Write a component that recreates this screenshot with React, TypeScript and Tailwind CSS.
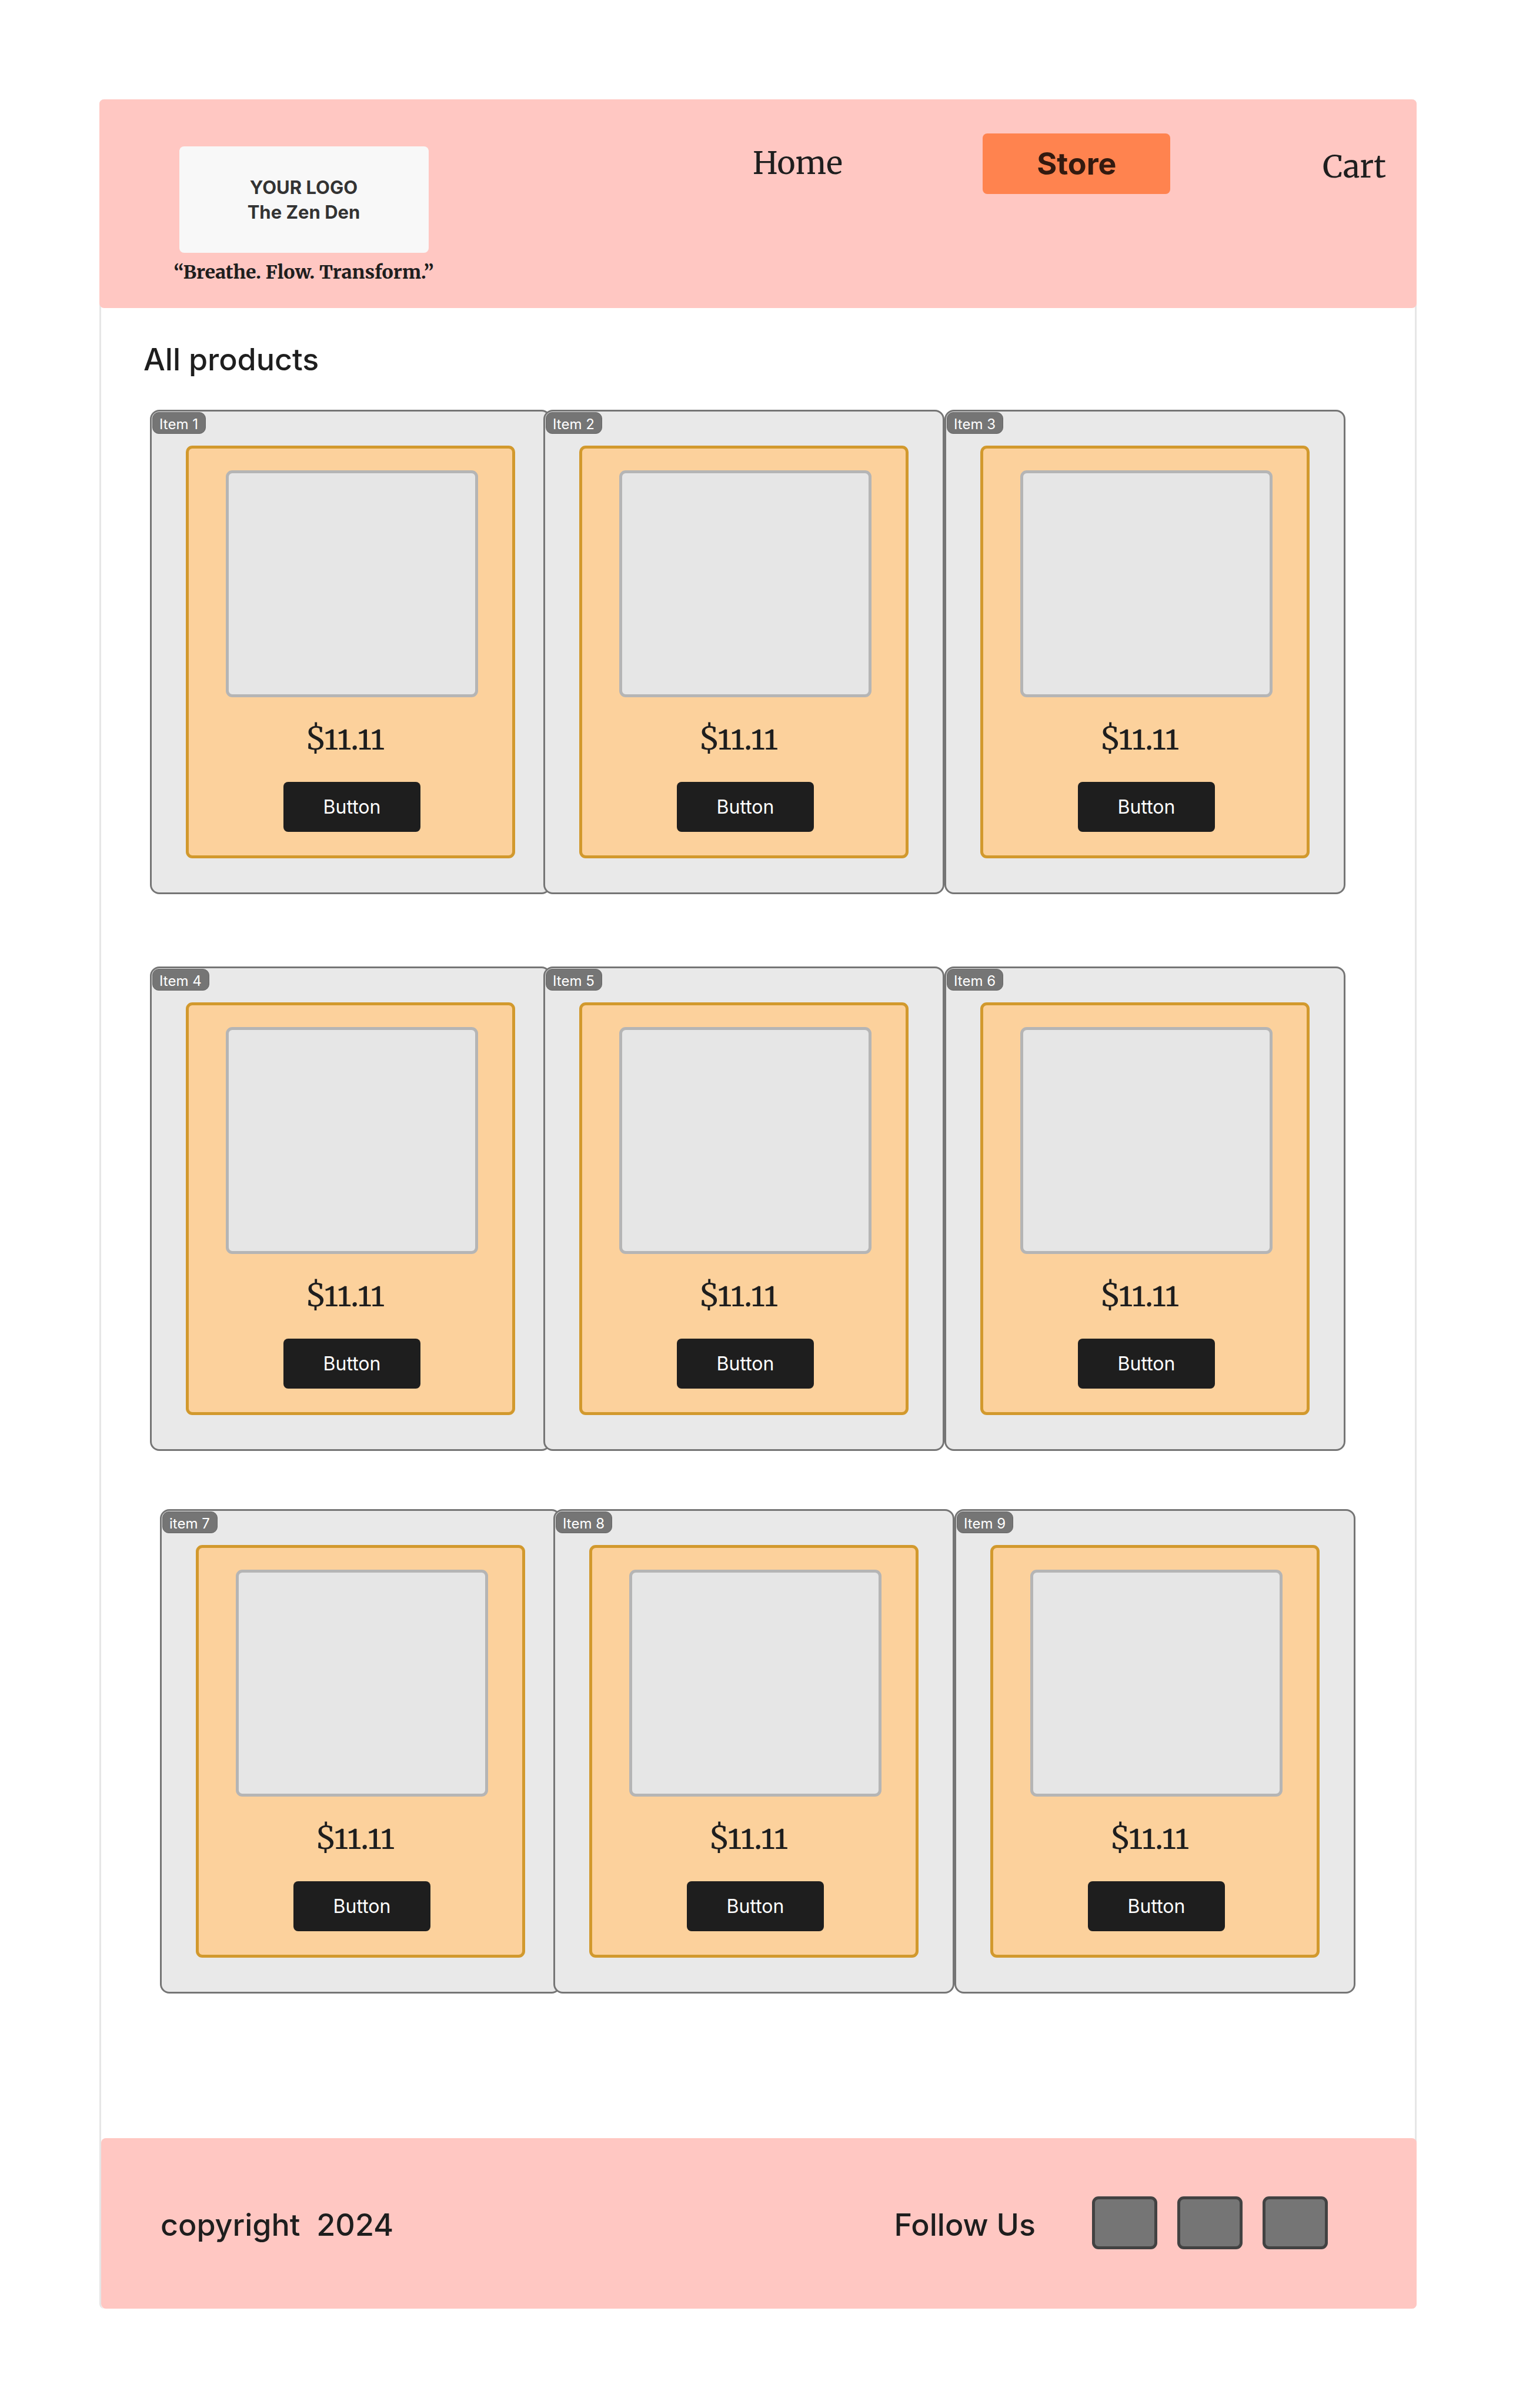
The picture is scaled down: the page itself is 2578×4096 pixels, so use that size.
const rows = [
  { id: "first", labels: ["Item 1", "Item 2", "Item 3"], className: "flex" },
  { id: "second", labels: ["Item 4", "Item 5", "Item 6"], className: "mt-[123px] flex" },
  { id: "third", labels: ["item 7", "Item 8", "Item 9"], className: "mt-[99px] ml-[17px] -mr-[17px] flex" },
];

const SERIF = "font-['Merriweather','DejaVu_Serif_Condensed','DejaVu_Serif',serif]";

function ProductCard({ label, overlap }: { label: string; overlap: boolean }) {
  return (
    <article
      className={
        overlap
          ? "relative -ml-[13px] min-w-0 flex-1 rounded-2xl border-[3px] border-[#757575] bg-[#e9e9e9] p-[58px]"
          : "relative min-w-0 flex-1 rounded-2xl border-[3px] border-[#757575] bg-[#e9e9e9] p-[58px]"
      }
    >
      <h2 className="absolute top-px left-px rounded-[11px] border border-[#666666] bg-[#757575] pt-1 pr-3 pl-[11px] text-[24px] leading-[31px] font-normal text-white">
        {label}
      </h2>
      <div className="rounded-[11px] border-[5px] border-[#d2992d] bg-[#fcd19c] pt-[37px] pr-[58px] pb-10 pl-[63px]">
        <div className="h-[386px] rounded-[11px] border-[5px] border-[#b5b5b5] bg-[#e6e6e6]" />
        <p className={`mt-[34px] pr-6 text-center text-[54px] leading-[72px] oldstyle-nums ${SERIF}`}>$11.11</p>
        <button
          type="button"
          className="mx-auto mt-[38px] block h-[85px] w-[233px] rounded-lg bg-[#1e1e1e] text-[32px] leading-10 font-normal text-white"
        >
          Button
        </button>
      </div>
    </article>
  );
}

export default function App() {
  return (
    <div className="min-h-screen bg-white p-[169px] font-['Inter',sans-serif] text-[#1e1e1e]">
      <div className="rounded-lg border-x-[3px] border-[#e6e6e6] bg-white">
        <header className="-mx-[3px] flex h-[355px] items-start rounded-lg bg-[#ffc7c2]">
          <div className="mt-20 ml-[110px] flex w-[475px] flex-col items-center">
            <div className="flex h-[181px] w-[424px] flex-col justify-center rounded-lg bg-[#f8f8f8] text-center text-[31px] leading-[42px] font-bold text-[#333333]">
              <span>YOUR LOGO</span>
              <span>The Zen Den</span>
            </div>
            <p className={`mt-2 text-[32px] leading-[50px] font-extrabold whitespace-nowrap ${SERIF}`}>
              “Breathe. Flow. Transform.”
            </p>
          </div>
          <nav className="mt-[58px] mr-[52px] ml-auto flex w-[1077px] items-start justify-between text-[53px]">
            <a href="#home" className={`mt-4 leading-[68px] ${SERIF}`}>
              Home
            </a>
            <a
              href="#store"
              className="mr-5 flex h-[103px] w-[319px] items-center justify-center rounded-lg bg-[#ff834f] text-[52px] leading-[64px] font-bold text-[#331a10]"
            >
              Store
            </a>
            <a href="#cart" className={`mt-[22px] leading-[68px] ${SERIF}`}>
              Cart
            </a>
          </nav>
        </header>

        <main className="pt-14 pr-[118px] pb-[246px] pl-[83px]">
          <h1 className="-ml-[11px] text-[52px] leading-[64px] font-medium">All products</h1>
          <div className="mt-[53px]">
            {rows.map((row) => (
              <section key={row.id} className={row.className}>
                {row.labels.map((label, i) => (
                  <ProductCard key={label} label={label} overlap={i === 1} />
                ))}
              </section>
            ))}
          </div>
        </main>

        <footer className="-mr-[3px] flex h-[290px] items-center rounded-lg bg-[#ffc7c2] pr-[151px] pl-[101px] text-[52px] leading-[64px] font-medium">
          <p className="mt-[6px] whitespace-pre">{"copyright  2024"}</p>
          <p className="mt-[6px] ml-auto">Follow Us</p>
          <div className="-mt-[3px] ml-[96px] flex gap-[34px]">
            {["one", "two", "three"].map((name) => (
              <a
                key={name}
                href="#social"
                aria-label={`Social link ${name}`}
                className="h-[90px] w-[111px] rounded-[11px] border-[5px] border-[#424242] bg-[#757575]"
              />
            ))}
          </div>
        </footer>
      </div>
    </div>
  );
}
